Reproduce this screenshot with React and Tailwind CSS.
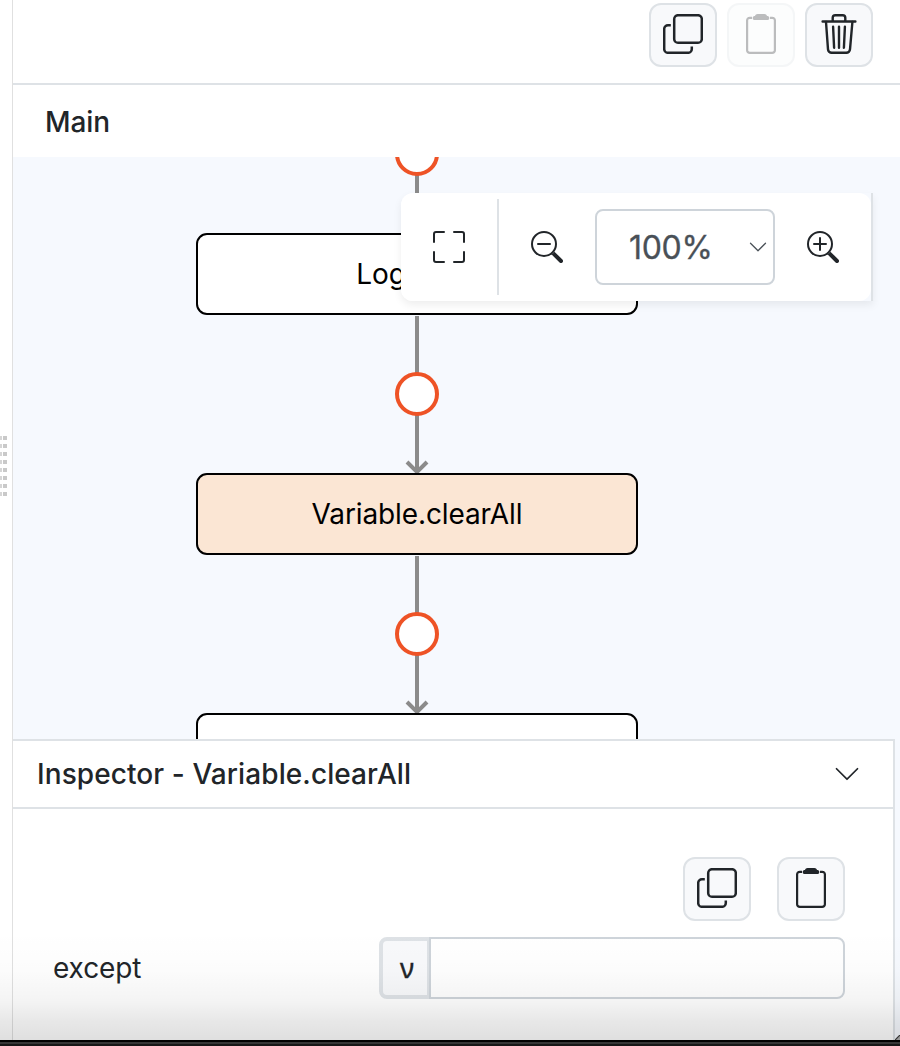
import React from "react";
import { BsFullscreen, BsZoomIn, BsZoomOut, BsChevronDown } from "react-icons/bs";

function CopyIcon() {
  return (
    <svg width="40" height="40" viewBox="0 0 40 40" fill="none" stroke="currentColor" strokeWidth="2.5">
      <rect x="11.2" y="1.2" width="27.6" height="27.6" rx="3.8" />
      <path d="M7.8 11.2H5A3.8 3.8 0 0 0 1.2 15v20A3.8 3.8 0 0 0 5 38.8h20a3.8 3.8 0 0 0 3.8-3.8v-2.5" />
    </svg>
  );
}

function ClipboardIcon() {
  return (
    <svg width="40" height="40" viewBox="0 0 40 40" fill="none" stroke="currentColor" strokeWidth="2.2">
      <path d="M11 3.8H8.8A2.7 2.7 0 0 0 6.1 6.5v29.7a2.7 2.7 0 0 0 2.7 2.7h22.4a2.7 2.7 0 0 0 2.7-2.7V6.5a2.7 2.7 0 0 0-2.7-2.7H29" />
      <path
        fill="currentColor"
        stroke="none"
        d="M16.6 0h6.8c1.300 0 2.200.9 2.700 1.900h.5c1.100.2 1.700.9 1.700 2C28.300 5.300 27.500 6 26.300 6H13.700c-1.200 0-2-.7-2-2.100 0-1.100.6-1.800 1.700-2h.5C14.400.9 15.300 0 16.600 0z"
      />
    </svg>
  );
}

function TrashIcon() {
  return (
    <svg width="40" height="40" viewBox="0 0 40 40" fill="none" stroke="currentColor" strokeWidth="2.4" strokeLinecap="round">
      <path d="M3.600 7.500h32.800M13.700 7V3.800a2.600 2.600 0 0 1 2.600-2.600h7.400a2.600 2.600 0 0 1 2.600 2.600V7" />
      <path d="M7 8l2 27.300a3.700 3.700 0 0 0 3.700 3.500h14.600a3.700 3.700 0 0 0 3.700-3.500L33.400 8" />
      <path d="M14.100 12.700l1 21M20 12.700v21M25.900 12.700l-1 21" />
    </svg>
  );
}

function IconButton({ children, disabled }) {
  return (
    <button
      disabled={disabled}
      className="flex h-16 w-[68px] items-start justify-center rounded-[12px] border-2 border-[#dee2e6] bg-[#f8f9fb] pt-[9px] text-[#212529] disabled:opacity-30"
    >
      {children}
    </button>
  );
}

function Node({ label, className }) {
  return (
    <div
      className={
        "absolute left-[183px] flex h-[82px] w-[442px] items-center justify-center rounded-[11px] border-2 border-black text-[28px] tracking-[-0.12px] text-black " +
        className
      }
    >
      {label}
    </div>
  );
}

function Edges() {
  return (
    <svg className="absolute left-0 top-0" width="887" height="582" fill="none">
      <g stroke="#8b8b8b" strokeWidth="4">
        <path d="M404 0V76M404 159V315M394 305l10 10 10-10M404 399V555M394 545l10 10 10-10" />
      </g>
      <g fill="#fff" stroke="#ee5326" strokeWidth="4">
        <circle cx="404" cy="-3" r="20" />
        <circle cx="404" cy="237" r="20" />
        <circle cx="404" cy="477" r="20" />
      </g>
    </svg>
  );
}

function ZoomBar() {
  return (
    <div className="absolute left-[388px] top-9 flex h-[108px] w-[472px] items-center rounded-l-[12px] border-r-2 border-[#dee2e6] shadow-[0_4px_8px_rgba(0,0,0,0.07)]">
      <div className="flex h-full w-[470px] items-center rounded-[12px] bg-white text-[#212529]">
        <div className="flex h-24 w-[98px] items-center justify-center border-r-2 border-[#dee2e6]">
          <BsFullscreen size={32} />
        </div>
        <div className="flex w-24 justify-center">
          <BsZoomOut size={32} />
        </div>
        <div className="flex h-[76px] w-[180px] items-center justify-between rounded-[8px] border-2 border-[#ced4da] pl-8 pr-[5px] text-[32px] text-[#495057]">
          <span className="pt-[2px] tracking-[-0.3px] [-webkit-text-stroke:0.3px_#495057]">100%</span>
          <BsChevronDown size={20} />
        </div>
        <div className="flex w-24 justify-center">
          <BsZoomIn size={32} />
        </div>
      </div>
    </div>
  );
}

function Grip() {
  return (
    <div className="grid grid-cols-[3px_4px] gap-x-0 gap-y-1 overflow-hidden">
      {Array.from({ length: 16 }, (_, i) => (
        <span key={i} className={i % 2 ? "h-1 bg-[#c9c9c9]" : "mr-px h-1 bg-[#d6d6d6]"} />
      ))}
    </div>
  );
}

export default function App() {
  return (
    <div className="relative flex h-[1046px] w-[900px] flex-col overflow-hidden bg-white font-['Inter','Liberation_Sans',sans-serif] text-[#212529]">
      <div className="flex h-[1040px]">
        <div className="w-3 shrink-0 pt-[436px]">
          <Grip />
        </div>
        <div className="flex w-[888px] flex-col border-l border-[#e0e0e0]">
          <div className="flex h-[85px] shrink-0 justify-end gap-[10px] border-b-2 border-[#dee2e6] pr-[27px] pt-[3px]">
            <IconButton><CopyIcon /></IconButton>
            <IconButton disabled><ClipboardIcon /></IconButton>
            <IconButton><TrashIcon /></IconButton>
          </div>
          <div className="flex h-[72px] shrink-0 items-center pl-8 pt-[2px] text-[28px] font-medium tracking-[-0.1px]">Main</div>
          <div className="relative h-[582px] shrink-0 overflow-hidden bg-[#f6f9fe]">
            <Edges />
            <Node label="Log.error" className="top-[76px] bg-white" />
            <Node label="Variable.clearAll" className="top-[316px] bg-[#fbe6d4]" />
            <Node label="" className="top-[556px] bg-white" />
            <ZoomBar />
          </div>
          <div className="h-[301px] shrink-0 bg-[#f6f9fe] pr-[5px]">
            <div className="h-full border-r-2 border-t-2 border-[#dee2e6] bg-white">
              <div className="flex h-[68px] items-center justify-between border-b-2 border-[#dee2e6] pl-6 pr-8 text-[28px] font-medium tracking-[0.09px]">
                <span>Inspector - Variable.clearAll</span>
                <BsChevronDown size={28} />
              </div>
              <div className="flex justify-end gap-[26px] pr-12 pt-12">
                <IconButton><CopyIcon /></IconButton>
                <IconButton><ClipboardIcon /></IconButton>
              </div>
              <div className="mt-4 flex h-[62px] pl-10 pr-12 text-[28px]">
                <div className="flex w-[326px] items-center tracking-[-0.1px]">except</div>
                <div className="flex w-[50px] items-center justify-center rounded-l-[8px] border-4 border-r-2 border-[#dee2e6] bg-[#f8f9fb] pl-1 font-['Noto_Sans',sans-serif] text-[27px] [-webkit-text-stroke:0.4px_#212529]">ν</div>
                <div className="flex-1 rounded-r-[8px] border-2 border-[#ced4da] bg-white" />
              </div>
            </div>
          </div>
        </div>
      </div>
      <div className="h-[2px] bg-black" />
      <div className="h-[2px] bg-[#353535]" />
      <div className="h-[2px] bg-[#161616]" />
      <div className="pointer-events-none absolute bottom-[6px] left-0 h-[110px] w-full bg-[linear-gradient(to_bottom,rgba(0,0,0,0),rgba(0,0,0,0.012)_36%,rgba(0,0,0,0.045)_64%,rgba(0,0,0,0.09)_82%,rgba(0,0,0,0.125))]" />
      <svg className="absolute bottom-[6px] right-0" width="5" height="5">
        <path d="M0 5L5 0V5z" fill="#999" />
        <path d="M0 5L5 0" stroke="#333" strokeWidth="1.2" />
      </svg>
    </div>
  );
}
